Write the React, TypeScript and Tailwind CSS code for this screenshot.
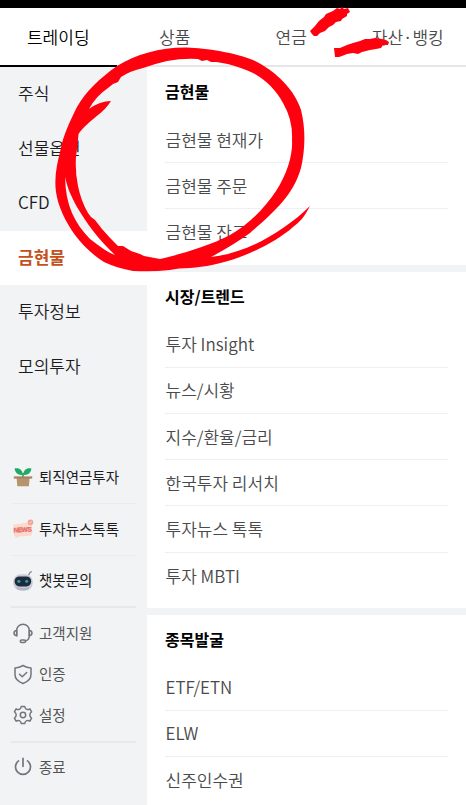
import React, { useState } from 'react';

interface MenuSection {
  title: string;
  items: string[];
}

interface Shortcut {
  label: string;
  icon: React.ReactNode;
}

const tabs = ['트레이딩', '상품', '연금', '자산·뱅킹'];

const categories = ['주식', '선물옵션', 'CFD', '금현물', '투자정보', '모의투자'];

const sections: MenuSection[] = [
  { title: '금현물', items: ['금현물 현재가', '금현물 주문', '금현물 잔고'] },
  {
    title: '시장/트렌드',
    items: ['투자 Insight', '뉴스/시황', '지수/환율/금리', '한국투자 리서치', '투자뉴스 톡톡', '투자 MBTI'],
  },
  { title: '종목발굴', items: ['ETF/ETN', 'ELW', '신주인수권'] },
];

const PlantIcon = () => (
  <svg width="20" height="20" viewBox="0 0 20 20">
    <path d="M10 10V6" stroke="#16925a" strokeWidth="1.5" />
    <path d="M9.8 7.8C5.200 8.400 2.200 6 1.600 1.500C6.500.6 9.600 3.200 9.800 7.800Z" fill="#1fa866" />
    <path d="M10.200 7.800C14.800 8.400 17.800 6 18.400 1.500C13.500.6 10.400 3.200 10.200 7.800Z" fill="#1fa866" />
    <path d="M3.500 10h13.200l-.8 9.200H4.300z" fill="#b8946e" />
    <path d="M.8 9.400h18.400v2.200H.8z" fill="#a58361" />
  </svg>
);

const NewsIcon = () => (
  <svg width="22" height="20" viewBox="0 0 22 20">
    <path d="M1.500 5.500L17 3.500q3 0 3 3l.3 8q0 2-2 2.200L7 17.500l-3.500 2-.3-2Q2 17.500 1.800 15z" fill="#fbd9cd" />
    <circle cx="18.500" cy="3.200" r="2.800" fill="#f3a393" />
    <path d="M17.200 3.200l1 1 1.700-2" fill="none" stroke="#fbd9cd" strokeWidth=".8" />
    <text x="1.700" y="13" fontSize="6.500" fontWeight="700" textLength="18" fontFamily="Liberation Sans, sans-serif" fill="#e8716a" stroke="#e8716a" strokeWidth=".35" transform="rotate(-3 10 11)">NEWS</text>
  </svg>
);

const BotIcon = () => (
  <svg width="20" height="20" viewBox="0 0 20 20">
    <path d="M15.500 4.500l1.300-2.700L18.800.5" fill="none" stroke="#858b9b" strokeWidth="1.300" />
    <rect x=".2" y="3.200" width="19.600" height="16.300" rx="7.500" fill="#c9ccd8" />
    <path d="M3 15.500q7 3.500 14 0l-2 3.300q-5 1.200-10 0z" fill="#b3b7c5" />
    <rect x="1.600" y="5.400" width="16.600" height="10" rx="4.800" fill="#1e2b3c" />
    <circle cx="5.900" cy="10.300" r="1.600" fill="#2e9c9a" />
    <circle cx="13.700" cy="10.300" r="1.600" fill="#2e9c9a" />
  </svg>
);

const HeadsetIcon = () => (
  <svg width="20" height="21" viewBox="0 0 20 21" fill="none" stroke="#747679" strokeWidth="1.500" strokeLinecap="round" strokeLinejoin="round">
    <path d="M3.700 12.700V7.500a6.300 6.300 0 0 1 12.600 0v5.200q0 4-3.800 5.300" />
    <path d="M3.700 7.500Q1 7.700 1 10.100t2.700 2.600zM16.300 7.500Q19 7.700 19 10.100t-2.700 2.600z" />
    <rect x="7.300" y="16.900" width="5.200" height="2.600" rx="1.300" />
  </svg>
);

const ShieldIcon = () => (
  <svg width="20" height="21" viewBox="0 0 20 21" fill="none" stroke="#747679" strokeWidth="1.500" strokeLinecap="round" strokeLinejoin="round">
    <path d="M10 1.500Q13.500 3.800 18 4v6.500Q18 16.500 10 19.500Q2 16.500 2 10.500V4Q6.500 3.800 10 1.500z" />
    <path d="M6.500 10.300l2.700 2.500 4.500-4.300" />
  </svg>
);

const GearIcon = () => (
  <svg width="20" height="20" viewBox="0 0 20 20" fill="none" stroke="#747679" strokeWidth="1.500" strokeLinejoin="round">
    <path d="M8.300 1.400h3.400q.5 2.500 2 3t3.200-.6l1.700 3q-1.800 1.600-1.800 3.200t1.800 3.200l-1.700 3q-1.700-1.100-3.200-.6t-2 3H8.300q-.5-2.500-2-3t-3.200.6l-1.700-3q1.800-1.600 1.800-3.200T1.400 6.800l1.700-3q1.700 1.100 3.200.6t2-3z" />
    <circle cx="10" cy="10" r="2.700" />
  </svg>
);

const PowerIcon = () => (
  <svg width="20" height="20" viewBox="0 0 20 20" fill="none" stroke="#747679" strokeWidth="1.700" strokeLinecap="round">
    <path d="M10 1.300v8M5.500 3.900a7.500 7.500 0 1 0 9 0" />
  </svg>
);

const shortcuts: Shortcut[] = [
  { label: '퇴직연금투자', icon: <PlantIcon /> },
  { label: '투자뉴스톡톡', icon: <NewsIcon /> },
  { label: '챗봇문의', icon: <BotIcon /> },
];

const settings: Shortcut[] = [
  { label: '고객지원', icon: <HeadsetIcon /> },
  { label: '인증', icon: <ShieldIcon /> },
  { label: '설정', icon: <GearIcon /> },
];

// Red marker strokes drawn over the menu
const Marker = () => (
  <svg className="pointer-events-none absolute left-0 top-0" width="466" height="805" viewBox="0 0 466 805" fill="#ff000f">
    <path
      fillRule="evenodd"
      d="M60.500 150C63 136 70 121 77 107C86 91 99 79 117 66C136 54 162 47 187 47.500C206 48 236 53 253 60C275 70 295 90 301 110C306 130 305 150 301 168C293 196 273 213 250 233C239 241 226 249 211 257C238 254 263 242 283 228C293 221 302 214 310 206C305 216 300 222 293 227C281 238 259 250 240 257C221 264 204 267 190 268Q178 268 170 270Q152 272 133 271C122 269 112 266 104 262C93 255 83 246 75 235C65 221 58 206 56 192C54 177 57 164 60.500 150Z
      M160 259C181 254 209 246 230 235C251 223 266 206 276 191C288 173 293 153 292 140Q293 120 283 103C276 90 266 80 253 73C238 66 225 63 216 62L211 62L207 60L202 61L198 59Q184 58 167 61Q154 64 143 68Q130 71 121 77L118 82L113 84L108 88Q96 96 89 109Q100 101 111 101Q106 109 98 115C91 121 83 127 78.500 134Q78 142 76 157Q75 172 78 186Q81 201 88 213L91 217L95 220L102 229Q109 237 115 243L118 246L123 246L131 251L140 254L144 256Z
      M65.200 177C67 187 71 196 77 207C87 224 99 240 115 255C107 252 99 246 90 239C82 231 76 222 72 213Q65 197 65.200 177Z"
    />
    <path d="M310 31L315 26L319 21L324 17L326 14L333 11L337 8L340 9L342 7L344 9L348 8L350 12L347 14L347 16L342 19L341 21L336 22L333 25L329 27L325 31L320 33L317 36L314 36L312 34Z" />
    <path d="M334 48L340 48L347 45L353 43L360 41L365 39L370 39L375 38L382 39L386 40L389 42L388 45L383 45L381 48L376 49L370 50L362 52L358 54L353 53L347 54L342 56L339 57L335 57Z" />
  </svg>
);

const ShortcutRow = ({ label, icon }: Shortcut) => (
  <>
    <span className="flex w-[23px] shrink-0 items-center justify-center">{icon}</span>
    <span className="ml-[5px] whitespace-nowrap">{label}</span>
  </>
);

const App = () => {
  const [tab, setTab] = useState('트레이딩');
  const [category, setCategory] = useState('금현물');

  return (
    <div className="relative flex h-[805px] w-[466px] flex-col overflow-hidden bg-white font-['Noto_Sans_CJK_KR',sans-serif] text-[17px] leading-none text-[#1c1c1e]">
      <div className="h-2 shrink-0 bg-black" />

      <nav className="grid h-[59px] shrink-0 grid-cols-4">
        {tabs.map(name => (
          <button
            key={name}
            onClick={() => setTab(name)}
            className={
              name === tab
                ? 'border-b-2 border-black font-[350] text-black'
                : 'border-b-2 border-[#e5e6e8] font-[350] text-[#4a4a4c]'
            }
          >
            {name}
          </button>
        ))}
      </nav>

      <div className="flex min-h-0 flex-1">
        <aside className="flex w-[147px] shrink-0 flex-col bg-[#f1f3f5]">
          {categories.map(name => (
            <button
              key={name}
              onClick={() => setCategory(name)}
              className={
                name === category
                  ? 'h-[54.500px] shrink-0 bg-white pb-[3px] pl-[18px] text-left font-bold text-[#c4511c]'
                  : 'h-[54.500px] shrink-0 pb-[3px] pl-[18px] text-left font-[350]'
              }
            >
              {name}
            </button>
          ))}

          <div className="mt-[57.500px] flex flex-col pl-[11px] pr-[11px] text-[14.500px]">
            {shortcuts.map((item, index) => (
              <div
                key={item.label}
                className={
                  index === shortcuts.length - 1
                    ? 'flex h-[52px] items-center border-b-2 border-[#e6e8ea]'
                    : 'flex h-[52px] items-center border-b border-[#e9ebed]'
                }
              >
                <ShortcutRow {...item} />
              </div>
            ))}
            <div className="flex flex-col border-b-2 border-[#e6e8ea] pb-[5px] pt-[5px] text-[#545456]">
              {settings.map(item => (
                <div key={item.label} className="flex h-[41px] items-center">
                  <ShortcutRow {...item} />
                </div>
              ))}
            </div>
            <div className="flex h-[49px] items-center text-[#545456]">
              <ShortcutRow label="종료" icon={<PowerIcon />} />
            </div>
          </div>
        </aside>

        <main className="flex min-w-0 flex-1 flex-col">
          {sections.map(section => (
            <section key={section.title} className="shrink-0 border-b-[7px] border-[#f1f3f5] pb-[9px] pl-[18px] pr-[18px]">
              <h2 className="flex h-[50px] items-center pb-[2px] text-[16px] font-bold text-black">{section.title}</h2>
              <ul className="divide-y divide-[#eeeff0] text-[#4a4a4c]">
                {section.items.map(item => (
                  <li key={item} className="flex h-[46.200px] items-center pb-px pl-[0.500px] font-[350]">
                    {item}
                  </li>
                ))}
              </ul>
            </section>
          ))}
        </main>
      </div>

      <Marker />
    </div>
  );
};

export default App;
